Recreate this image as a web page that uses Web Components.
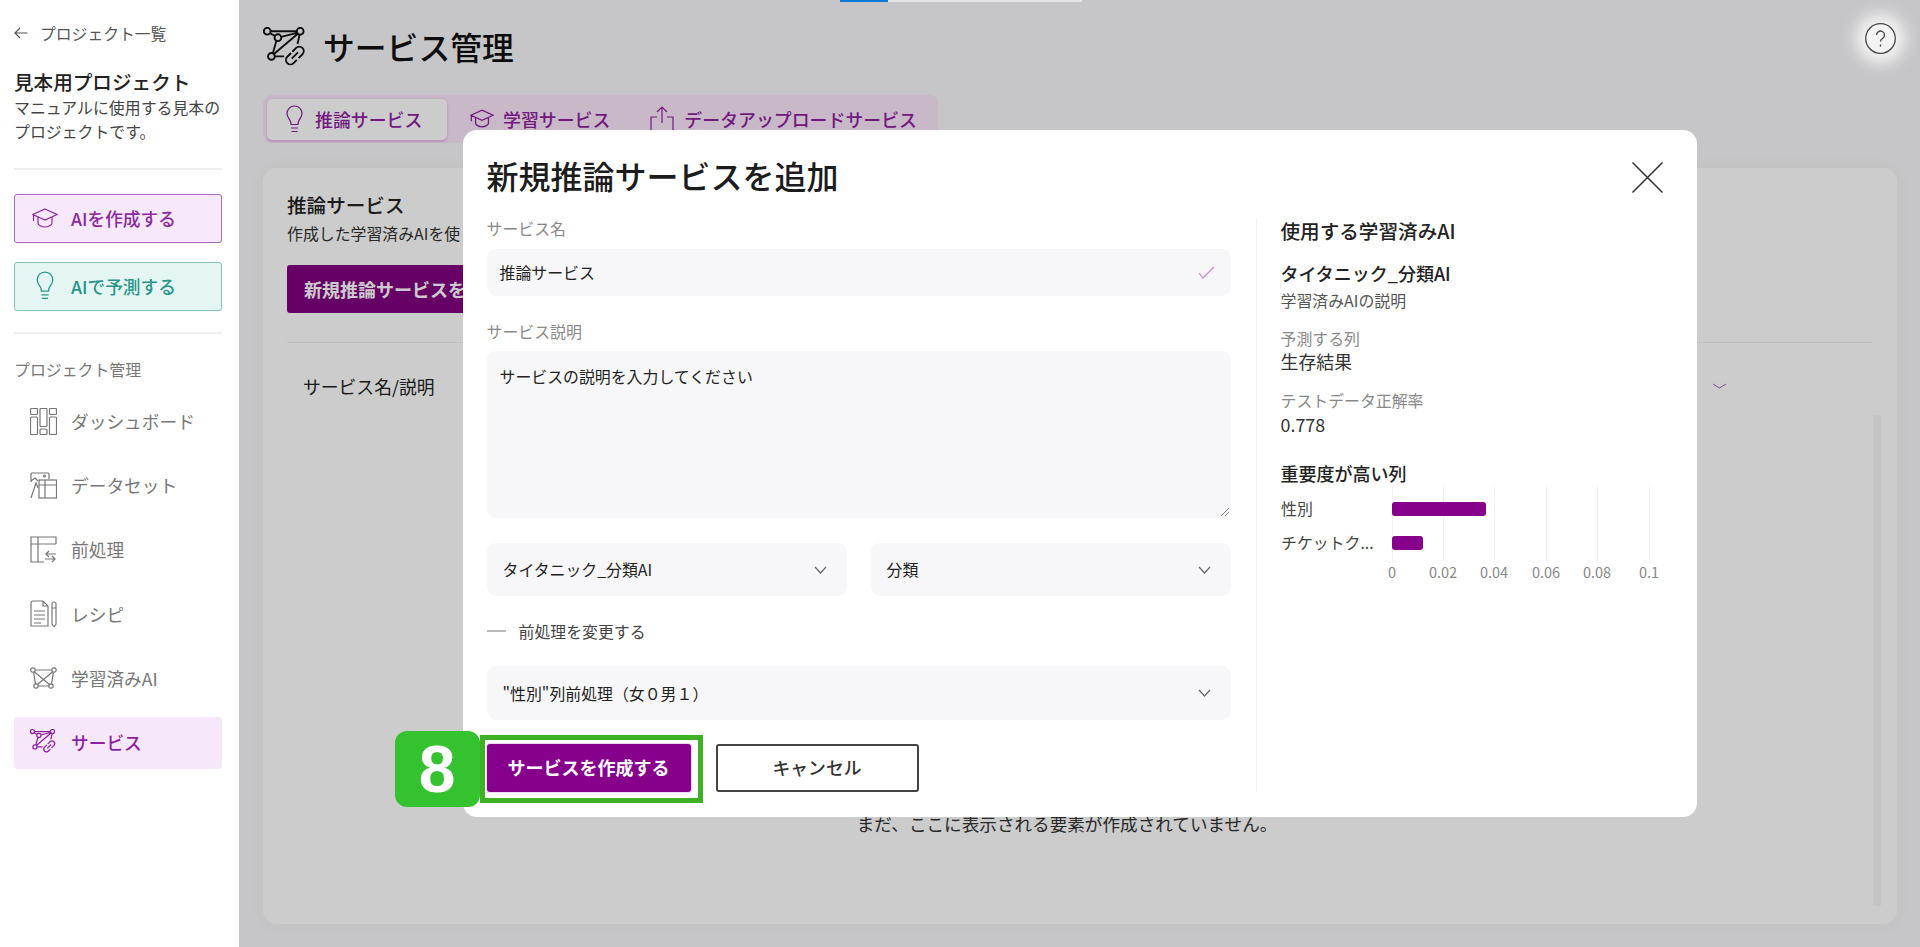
<!DOCTYPE html>
<html lang="ja">
<head>
<meta charset="utf-8">
<title>サービス管理</title>
<style>
  html, body { margin: 0; height: 947px; overflow: hidden; }
  body {
    display: flex;
    font-family: "Noto Sans CJK JP", "Noto Sans", sans-serif;
    color: #222;
    background: #fff;
  }
</style>
</head>
<body>
<app-sidebar></app-sidebar>
<service-page></service-page>

<script>
const serviceGlyph = `
  <circle cx="12" cy="16.7" r="3.8"/><circle cx="49" cy="16.7" r="3.8"/><circle cx="24" cy="24" r="3.8"/><circle cx="16.7" cy="45" r="3.8"/>
  <path d="M15.8 16.7h29.4M15 19l5.700 3M27.600 23l18-4.500M46.300 19.500 19.500 42.300M22.300 27.500l-4 14M20.500 45H31M48.300 20.500 46 31"/>
  <g transform="rotate(-45 43 44)"><path d="M42 39h-6a5 5 0 0 0 0 10h5M44 39h6a5 5 0 0 1 0 10h-6M38 44h10"/></g>`;

// name: [viewBox, markup]
const icons = {
  back: ['0 0 14 12', '<path d="M13.500 6H1M6 1 1 6l5 5"/>'],
  cap: ['0 0 26 20', '<path d="M13 1 25 6.500 13 12 1 6.500ZM6 9.500v5.500c0 2 3.500 4 7 4s7-2 7-4V9.500M1.500 7v6"/>'],
  bulb: ['0 0 17 28', '<path d="M8.500 1C4 1 1 4.600 1 8.600c0 3 1.600 4.600 3 6.800.9 1.400 1 2.600 1 4.100h7c0-1.500.1-2.700 1-4.100 1.400-2.200 3-3.800 3-6.800C16 4.600 13 1 8.500 1ZM5 23h7M5.500 26.500h6"/>'],
  upload: ['0 0 24 26', '<path d="M7 11H1v14h22V11h-6M12 17V1M7 6l5-5 5 5"/>'],
  dashboard: ['0 0 27 27', '<rect x=".5" y=".5" width="7" height="6" rx="1"/><rect x=".5" y="9" width="7" height="17.500" rx="1"/><rect x="10" y=".5" width="7" height="18" rx="1"/><rect x="10" y="21" width="7" height="5.500" rx="1"/><rect x="19.500" y=".5" width="7" height="6" rx="1"/><rect x="19.500" y="9" width="7" height="17.500" rx="1"/>'],
  dataset: ['0 0 27 27', '<path d="M1 10V2a1 1 0 0 1 1-1h16a1 1 0 0 1 1 1v5M1 9l4-3 3 3M1 26l5-15 2 5"/><circle cx="14.500" cy="4" r="1"/><rect x="9" y="8" width="17.500" height="18"/><path d="M9 13h17.500M15 8v18"/>'],
  preprocess: ['0 0 27 27', '<path d="M26 8V1H1v25h13M1 8h25M8 1v25M16 18h10M19 15l-3 3 3 3M15 23h10M22 20l3 3-3 3"/>'],
  recipe: ['0 0 27 27', '<path d="M1 3a2 2 0 0 1 2-2h10l5 5v20H1zM13 1v5h5M4 11h11M4 15h11M4 19h11M4 23h7M22 4a2 2 0 0 1 4 0v20l-2 3-2-3zM22 8h4"/>'],
  model: ['0 0 27 22', '<circle cx="3" cy="3" r="2.200"/><circle cx="24" cy="3" r="2.200"/><circle cx="6" cy="19" r="2.200"/><circle cx="21" cy="19" r="2.200"/><path d="M5.200 3h16.600M4.200 4.800 19.500 17.500M22.800 4.800 7.500 17.500M3.500 5.200 5.500 16.800M23.500 5.200 21.500 16.800M8.200 19h10.600"/>'],
  service: ['8 12 49 46', serviceGlyph],
  check: ['0 0 17 13', '<path d="M1 7l4 5L16 1"/>'],
  chevron: ['0 0 13 8', '<path d="M1 1l5.500 6L12 1"/>'],
  flat: ['0 0 15 6', '<path d="M1 1l6.500 4L14 1"/>'],
  close: ['0 0 31 31', '<path d="M.5.5l30 30M30.500.5l-30 30"/>'],
  help: ['0 0 31 31', '<circle cx="15.500" cy="15.500" r="14.800"/><path d="M11.500 12a4 4 0 1 1 6.300 3.300c-1.500 1-2.300 1.700-2.300 3.200M15.500 21.500v2"/>'],
};

class UiIcon extends HTMLElement {
  constructor() {
    super();
    this.attachShadow({mode: 'open'});
    const [box, body] = icons[this.getAttribute('name')];
    const w = this.getAttribute('w');
    const h = this.getAttribute('h');
    const sw = this.getAttribute('sw') || 1.2;
    this.shadowRoot.innerHTML = `
      <style>
        :host { display: block; flex: none; width: ${w}px; height: ${h}px; }
        svg { display: block; width: 100%; height: 100%; fill: none; stroke: currentColor; stroke-width: ${sw}; }
      </style>
      <svg viewBox="${box}" preserveAspectRatio="xMidYMid meet">${body}</svg>`;
  }
}
customElements.define('ui-icon', UiIcon);

class ActionLink extends HTMLElement {
  constructor() {
    super();
    this.attachShadow({mode: 'open'});
    this.shadowRoot.innerHTML = `
      <style>
        :host {
          display: flex; align-items: center; gap: 13px; box-sizing: border-box;
          height: 49px; padding: 0 0 2px 17px;
          font-size: 17.700px; font-weight: 500; border: 1px solid var(--edge); border-radius: 3px;
          background: var(--fill); color: var(--ink);
        }
        .slot { display: flex; justify-content: center; width: 26px; }
      </style>
      <div class="slot"><slot name="icon"></slot></div><slot></slot>`;
  }
}
customElements.define('action-link', ActionLink);

class NavItem extends HTMLElement {
  constructor() {
    super();
    this.attachShadow({mode: 'open'});
    this.shadowRoot.innerHTML = `
      <style>
        :host {
          display: flex; align-items: center; gap: 14px; box-sizing: border-box;
          height: 52px; padding: 0 0 2px 16px; border-radius: 4px;
          font-size: 17.700px; color: #777;
        }
        :host([active]) { background: #f6e8fa; color: #8d1f9f; font-weight: 500; }
      </style>
      <slot name="icon"></slot><slot></slot>`;
  }
}
customElements.define('nav-item', NavItem);

class AppSidebar extends HTMLElement {
  constructor() {
    super();
    this.attachShadow({mode: 'open'});
    this.shadowRoot.innerHTML = `
      <style>
        :host {
          display: block; flex: none; box-sizing: border-box; position: relative; z-index: 2;
          width: 239px; height: 947px; padding: 21px 17px 0 14px; background: #fff;
        }
        .back { display: flex; align-items: center; gap: 12px; height: 24px; font-size: 15.800px; color: #555; }
        h1 { margin: 23px 0 0; font-size: 19.600px; line-height: 27px; font-weight: 500; color: #222; }
        p { margin: 1px 0 0; font-size: 15.900px; line-height: 24px; color: #444; }
        hr { margin: 0; border: 0; height: 2px; background: #eee; }
        .one { margin-top: 24px; }
        .two { margin-top: 21px; }
        .teal { margin-top: 19px; --edge: #83c4ba; --fill: #e5f5f3; --ink: #27968a; }
        .purple { margin-top: 24px; --edge: #ad6cbb; --fill: #f7e9fb; --ink: #8d2aa0; }
        h2 { margin: 24px 0 14px; font-size: 15.900px; line-height: 24px; font-weight: 400; color: #777; }
        nav { display: flex; flex-direction: column; gap: 12.200px; }
      </style>
      <div class="back"><ui-icon name="back" w="14" h="12"></ui-icon>プロジェクト一覧</div>
      <h1>見本用プロジェクト</h1>
      <p>マニュアルに使用する見本の<br>プロジェクトです。</p>
      <hr class="one">
      <action-link class="purple"><ui-icon slot="icon" name="cap" w="26" h="20"></ui-icon>AIを作成する</action-link>
      <action-link class="teal"><ui-icon slot="icon" name="bulb" w="18" h="29"></ui-icon>AIで予測する</action-link>
      <hr class="two">
      <h2>プロジェクト管理</h2>
      <nav>
        <nav-item><ui-icon slot="icon" name="dashboard" w="27" h="27"></ui-icon>ダッシュボード</nav-item>
        <nav-item><ui-icon slot="icon" name="dataset" w="27" h="27"></ui-icon>データセット</nav-item>
        <nav-item><ui-icon slot="icon" name="preprocess" w="27" h="27"></ui-icon>前処理</nav-item>
        <nav-item><ui-icon slot="icon" name="recipe" w="27" h="27"></ui-icon>レシピ</nav-item>
        <nav-item><ui-icon slot="icon" name="model" w="27" h="22"></ui-icon>学習済みAI</nav-item>
        <nav-item active><ui-icon slot="icon" name="service" w="27" h="25" sw="2.200"></ui-icon>サービス</nav-item>
      </nav>`;
  }
}
customElements.define('app-sidebar', AppSidebar);

class TabBar extends HTMLElement {
  constructor() {
    super();
    this.attachShadow({mode: 'open'});
    this.shadowRoot.innerHTML = `
      <style>
        :host {
          display: inline-flex; align-items: center; box-sizing: border-box;
          height: 48px; padding: 0 4px; border-radius: 8px; background: #fbe6fb;
          font-size: 17.900px; font-weight: 500; color: #8f1f9f;
        }
        div { display: flex; align-items: center; box-sizing: border-box; height: 41px; padding-bottom: 1px; }
        .on {
          width: 180px; padding-left: 19px; gap: 12px; border-radius: 5px;
          background: #fff; box-shadow: 0 2px 2px #e6b8e6, 0 0 3px #e8c8e8;
        }
        .a { padding: 0 20px 1px 23px; gap: 9px; }
        .b { padding: 0 17px 1px 20px; gap: 10px; }
      </style>
      <div class="on"><ui-icon name="bulb" w="17" h="28"></ui-icon>推論サービス</div>
      <div class="a"><ui-icon name="cap" w="24" h="19" sw="1.400"></ui-icon>学習サービス</div>
      <div class="b"><ui-icon name="upload" w="24" h="26"></ui-icon>データアップロードサービス</div>`;
  }
}
customElements.define('tab-bar', TabBar);

class FieldBox extends HTMLElement {
  constructor() {
    super();
    this.attachShadow({mode: 'open'});
    this.shadowRoot.innerHTML = `
      <style>
        :host {
          display: flex; align-items: center; justify-content: space-between; box-sizing: border-box;
          padding: 0 16px 0 13px; border-radius: 9px; background: #f7f7f9;
          font-size: 15.900px; color: #222; position: relative;
        }
      </style>
      <span><slot></slot></span><slot name="end"></slot>`;
  }
}
customElements.define('field-box', FieldBox);

class FeatureChart extends HTMLElement {
  constructor() {
    super();
    this.attachShadow({mode: 'open'});
    const lines = [111, 162, 213, 265, 316, 368];
    const ticks = ['0', '0.02', '0.04', '0.06', '0.08', '0.1'];
    this.shadowRoot.innerHTML = `
      <style>
        :host { display: block; }
        svg { display: block; font-family: "Noto Sans CJK JP", "Noto Sans", sans-serif; }
      </style>
      <svg width="392" height="100" viewBox="0 0 392 100">
        ${lines.map(x => `<line x1="${x}.5" x2="${x}.5" y1="0" y2="76" stroke="#f1f1f1"/>`).join('')}
        <rect x="111" y="16" width="94" height="14" rx="3" fill="#86008c"/>
        <rect x="111" y="50" width="31" height="14" rx="3" fill="#86008c"/>
        <text x="0" y="29" font-size="15.900" fill="#444">性別</text>
        <text x="0" y="63" font-size="15.900" fill="#444">チケットク...</text>
        ${lines.map((x, i) => `<text x="${x}" y="92" font-size="14.500" fill="#888" text-anchor="middle">${ticks[i]}</text>`).join('')}
      </svg>`;
  }
}
customElements.define('feature-chart', FeatureChart);

class TourMark extends HTMLElement {
  constructor() {
    super();
    this.attachShadow({mode: 'open'});
    this.shadowRoot.innerHTML = `
      <style>
        :host { position: absolute; inset: -9px -12px -11px -7px; border: 5px solid #3fb024; pointer-events: none; }
        div {
          position: absolute; left: -90px; top: -9px; width: 85px; height: 76px; border-radius: 12px;
          display: flex; align-items: center; justify-content: center;
          background: #34c22e; color: #fff; font: 700 66px/1 "Liberation Sans", sans-serif;
        }
      </style>
      <div>8</div>`;
  }
}
customElements.define('tour-mark', TourMark);

class ServiceModal extends HTMLElement {
  constructor() {
    super();
    this.attachShadow({mode: 'open'});
    this.shadowRoot.innerHTML = `
      <style>
        :host {
          display: block; box-sizing: border-box; width: 1234px; height: 687px;
          padding: 25px 34px 0 24px; border-radius: 14px; background: #fff; color: #222;
        }
        header { display: flex; justify-content: space-between; height: 63px; }
        h1 { margin: 0; font-size: 32px; line-height: 40px; font-weight: 500; color: #1c1c1c; }
        .close { margin-top: 7px; color: #333; }
        .body { display: flex; height: 574px; }
        .form { display: flex; flex-direction: column; flex: none; width: 744px; }
        label { font-size: 15.900px; line-height: 22px; color: #888; }
        .name { height: 47px; margin: 9px 0 25px; }
        .text { height: 167px; margin: 8px 0 25px; align-items: flex-start; padding-top: 14px; }
        .grip { position: absolute; right: 1px; bottom: 1px; color: #888; }
        .pair { display: flex; gap: 24px; }
        .pair field-box { flex: 1; height: 53px; }
        .check { color: #c78bd3; }
        .sel { padding: 0 20px 0 16px; }
        .sel ui-icon { color: #666; }
        .toggle { display: flex; align-items: center; gap: 13px; margin: 24px 0; height: 22px; font-size: 15.900px; color: #444; }
        .toggle i { width: 19px; height: 2px; background: #bbb; }
        .pre { height: 54px; }
        .foot { display: flex; gap: 25px; margin-top: 24px; }
        .btn {
          box-sizing: border-box; height: 48px; display: flex; align-items: center; justify-content: center;
          padding-bottom: 2px; border-radius: 3px; font-size: 17.800px;
        }
        .go { position: relative; width: 204px; background: #86008c; color: #fff; font-size: 18px; font-weight: 700; box-shadow: 0 0 0 1px #f0d8f0; }
        .no { width: 203px; border: 2px solid #444; color: #333; font-weight: 500; }
        aside { flex: 1; margin-left: 25px; padding-left: 24px; border-left: 1px solid #f1f1f1; }
        h2, h3 { margin: 0; font-weight: 500; color: #222; }
        h2 { font-size: 19.600px; line-height: 26px; }
        .aname { margin-top: 17px; font-size: 18px; line-height: 24px; }
        .adesc { margin-top: 5px; font-size: 15.900px; line-height: 22px; color: #555; }
        .k { margin-top: 16px; font-size: 15.900px; line-height: 22px; color: #888; }
        .v { font-size: 17.900px; line-height: 24px; color: #333; }
        .fit { margin-top: -1px; margin-bottom: 17px; }
        .fit + .k { margin-top: 0; }
        .imp { margin-top: 25px; font-size: 18px; line-height: 24px; }
        feature-chart { margin-top: 1px; }
      </style>
      <header>
        <h1>新規推論サービスを追加</h1>
        <ui-icon class="close" name="close" w="31" h="31" sw="1.500"></ui-icon>
      </header>
      <div class="body">
        <div class="form">
          <label>サービス名</label>
          <field-box class="name">推論サービス<ui-icon slot="end" class="check" name="check" w="17" h="13"></ui-icon></field-box>
          <label>サービス説明</label>
          <field-box class="text">サービスの説明を入力してください
            <svg slot="end" class="grip" width="10" height="10" viewBox="0 0 10 10" fill="none" stroke="currentColor"><path d="M9 1 1 9M9 5 5 9"/></svg>
          </field-box>
          <div class="pair">
            <field-box class="sel">タイタニック_分類AI<ui-icon slot="end" name="chevron" w="13" h="8"></ui-icon></field-box>
            <field-box class="sel">分類<ui-icon slot="end" name="chevron" w="13" h="8"></ui-icon></field-box>
          </div>
          <div class="toggle"><i></i>前処理を変更する</div>
          <field-box class="sel pre">"性別"列前処理（女０男１）<ui-icon slot="end" name="chevron" w="13" h="8"></ui-icon></field-box>
          <div class="foot">
            <div class="btn go">サービスを作成する<tour-mark></tour-mark></div>
            <div class="btn no">キャンセル</div>
          </div>
        </div>
        <aside>
          <h2>使用する学習済みAI</h2>
          <h3 class="aname">タイタニック_分類AI</h3>
          <div class="adesc">学習済みAIの説明</div>
          <div class="k">予測する列</div>
          <div class="v fit">生存結果</div>
          <div class="k">テストデータ正解率</div>
          <div class="v">0.778</div>
          <h3 class="imp">重要度が高い列</h3>
          <feature-chart></feature-chart>
        </aside>
      </div>`;
  }
}
customElements.define('service-modal', ServiceModal);

class ServicePage extends HTMLElement {
  constructor() {
    super();
    this.attachShadow({mode: 'open'});
    this.shadowRoot.innerHTML = `
      <style>
        :host {
          display: flex; flex-direction: column; flex: 1; min-width: 0; box-sizing: border-box; position: relative;
          height: 947px; padding: 27px 23px 23px 24px; background: #f8f8fa;
        }
        header { display: flex; align-items: center; gap: 15px; height: 41px; color: #111; }
        header h1 { margin: -2px 0 0; font-size: 31.800px; font-weight: 500; line-height: 41px; }
        tab-bar { align-self: flex-start; margin-top: 27px; }
        .card {
          flex: 1; display: flex; flex-direction: column; margin-top: 25px; min-height: 0;
          padding: 25px 16px 18px 24px; border-radius: 14px; background: #fff;
          box-shadow: 0 0 18px rgba(0, 0, 0, .04);
        }
        h2 { margin: 0; font-size: 19.600px; line-height: 24px; font-weight: 500; color: #222; }
        .intro { margin: 6px 0 20px; font-size: 15.900px; line-height: 22px; color: #333; }
        .add {
          display: flex; align-items: center; box-sizing: border-box; width: 300px; height: 48px; padding-left: 17px;
          margin-bottom: 29px; border-radius: 3px; background: #800080; color: #fff; font-size: 18px; font-weight: 700;
        }
        .table { flex: 1; display: flex; min-height: 0; }
        .list { flex: 1; display: flex; flex-direction: column; border-top: 1px solid #eee; }
        .head {
          display: flex; justify-content: space-between; align-items: center; height: 26px; margin-top: 30px;
          padding: 0 146px 0 16px; font-size: 17.800px; color: #222;
        }
        .head ui-icon { color: #a45cb4; }
        .empty { margin-top: auto; padding: 0 26px 69px 0; text-align: center; font-size: 17.600px; line-height: 26px; color: #333; }
        .bar { flex: none; width: 8px; margin-top: 73px; background: #f7f7f8; }
        .veil { position: absolute; inset: 0; display: flex; align-items: center; justify-content: center; background: rgba(0, 0, 0, .2); }
        .help {
          position: absolute; right: 24px; top: 23px; border-radius: 50%; color: #444;
          background: #f3f3f3; box-shadow: 0 0 16px 9px rgba(255, 255, 255, .85);
        }
        .load { position: absolute; left: 601px; top: 0; width: 242px; height: 2px; background: linear-gradient(90deg, #0a78d6 48px, #e4e4e6 48px); }
      </style>
      <header><ui-icon name="service" w="45" h="41" sw="2.100"></ui-icon><h1>サービス管理</h1></header>
      <tab-bar></tab-bar>
      <section class="card">
        <h2>推論サービス</h2>
        <div class="intro">作成した学習済みAIを使</div>
        <div class="add">新規推論サービスを</div>
        <div class="table">
          <div class="list">
            <div class="head"><span>サービス名/説明</span><ui-icon name="flat" w="15" h="6" sw="1"></ui-icon></div>
            <div class="empty">まだ、ここに表示される要素が作成されていません。</div>
          </div>
          <div class="bar"></div>
        </div>
      </section>
      <div class="veil"><service-modal></service-modal></div>
      <div class="load"></div>
      <ui-icon class="help" name="help" w="31" h="31" sw="1.300"></ui-icon>`;
  }
}
customElements.define('service-page', ServicePage);
</script>
</body>
</html>
